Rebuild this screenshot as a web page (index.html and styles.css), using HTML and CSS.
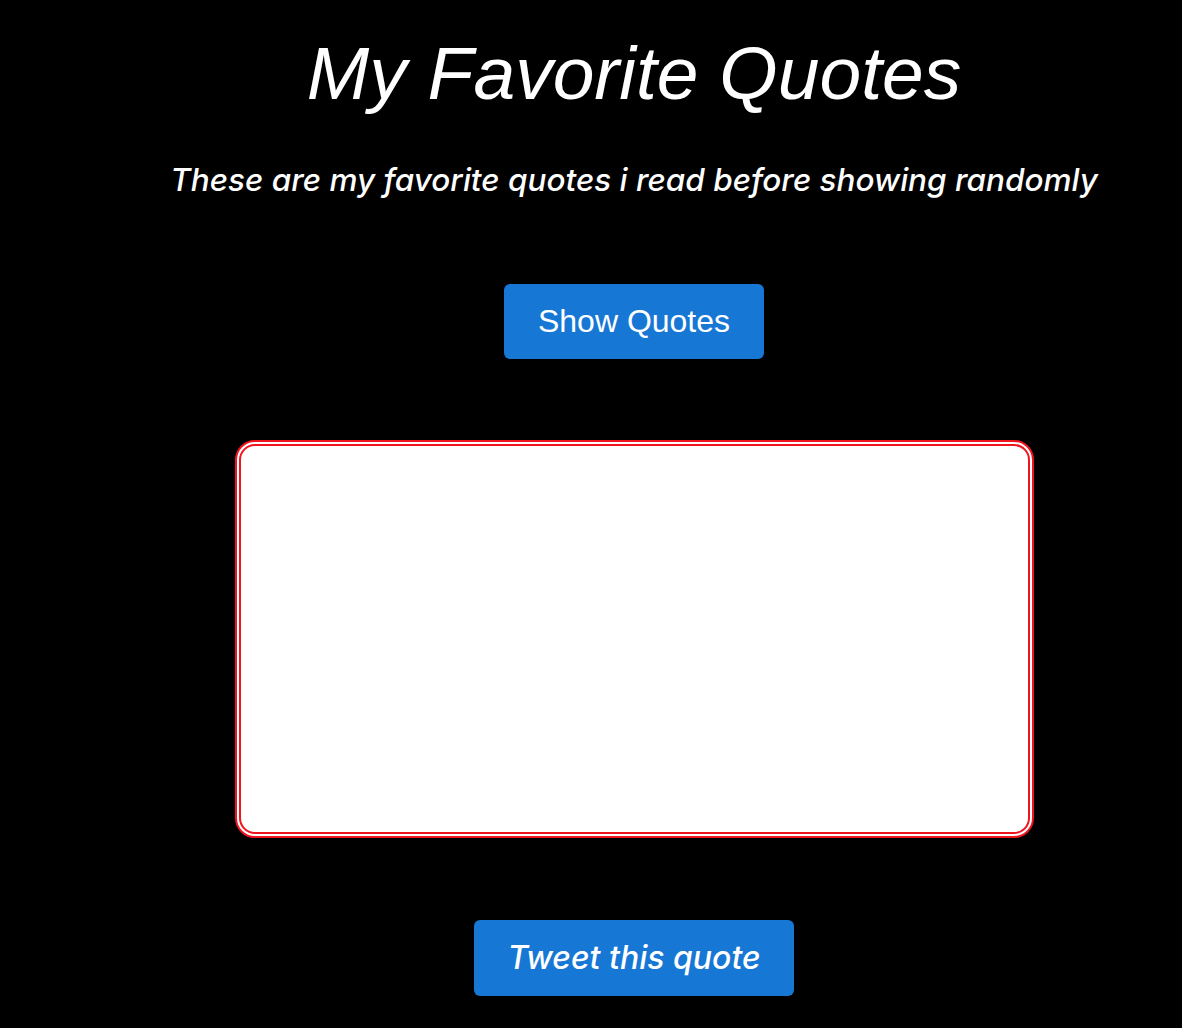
FILE: index.html
```html
<!DOCTYPE html>
<html>
<head>
<meta charset="utf-8">
<link rel="stylesheet" href="styles.css">
</head>
<body>
<main class="page">
  <h1 class="title">My Favorite Quotes</h1>
  <p class="subtitle">These are my favorite quotes i read before showing randomly</p>
  <button class="btn btn-show">Show Quotes</button>
  <div class="quote-box"></div>
  <button class="btn btn-tweet">Tweet this quote</button>
</main>
</body>
</html>
```
FILE: styles.css
```css
html, body {
  margin: 0;
  padding: 0;
  background: #000;
}
.page {
  display: flex;
  flex-direction: column;
  align-items: center;
  padding-left: 86px;
  color: #fff;
}
.title {
  margin: 36px 0 0;
  font-family: "Liberation Sans", Arial, sans-serif;
  font-style: italic;
  font-weight: normal;
  font-size: 75px;
  line-height: 1;
}
.subtitle {
  margin: 53px 0 0;
  font-family: Inter, "Noto Sans", sans-serif;
  font-style: italic;
  font-weight: 500;
  font-size: 31.5px;
  line-height: 1;
}
.btn {
  border: none;
  border-radius: 6px;
  background: #1777d5;
  color: #fff;
  cursor: pointer;
}
.btn-show {
  margin-top: 88px;
  width: 260px;
  height: 75px;
  font-family: "Liberation Sans", Arial, sans-serif;
  font-size: 32px;
}
.quote-box {
  margin-top: 81px;
  width: 799px;
  height: 398px;
  box-sizing: border-box;
  background: #fff;
  border: 6px double #f0141e;
  border-radius: 20px;
}
.btn-tweet {
  margin-top: 82px;
  width: 320px;
  height: 76px;
  font-family: Inter, "Noto Sans", sans-serif;
  font-style: italic;
  font-weight: 500;
  font-size: 32px;
}
```
